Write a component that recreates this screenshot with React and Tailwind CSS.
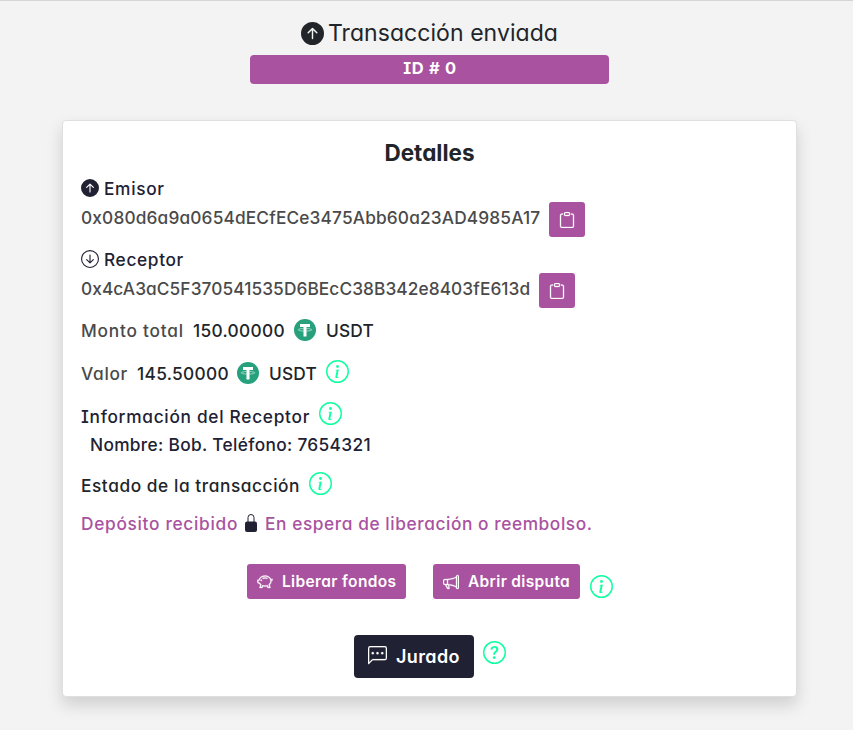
import React from "react";
import {
  BsArrowUpCircleFill,
  BsArrowDownCircle,
  BsClipboard,
  BsInfoCircle,
  BsQuestionCircle,
  BsPiggyBank,
  BsMegaphone,
  BsChatLeftDots,
} from "react-icons/bs";

function Tether() {
  return (
    <svg viewBox="0 0 22 22" className="size-[22px] shrink-0">
      <circle cx="11" cy="11" r="11" fill="#26a17b" />
      <path d="M6 5h10v2.9h-3.5v9.6h-3V7.9H6z" fill="#fff" />
      <path
        d="M9.5 9.5C6.3 9.6 4.2 10.2 4.2 10.8c0 .7 3 1.3 6.8 1.3s6.8-.6 6.8-1.3c0-.6-2.1-1.2-5.3-1.3"
        fill="none"
        stroke="#fff"
        strokeOpacity=".65"
        strokeWidth=".8"
      />
    </svg>
  );
}

function Lock() {
  return (
    <svg viewBox="0 0 12 18" className="h-[18px] w-3 shrink-0">
      <path d="M3 8V3.5a3 3 0 0 1 6 0V8" fill="none" stroke="#212134" strokeWidth="1" />
      <rect y="7.5" width="12" height="10.5" rx="2" fill="#212134" />
    </svg>
  );
}

function Info({ className = "" }) {
  return <BsInfoCircle className={`size-[23px] shrink-0 text-[#10ffa0] ${className}`} />;
}

function CopyButton() {
  return (
    <button className="flex h-[35px] w-9 items-center justify-center rounded-[3px] bg-[#a9529f] text-white">
      <BsClipboard className="size-4 stroke-[0.3]" />
    </button>
  );
}

export default function App() {
  return (
    <div className="flex h-[730px] w-[853px] flex-col overflow-hidden border-t border-[#d5d5d5] bg-[#f3f3f3] [font-family:Inter,'Noto_Sans',sans-serif] [font-feature-settings:'cv11','cv08'] text-[#212529]">
      <header className="ml-[250px] flex w-[359px] flex-col">
        <h1 className="mt-4 flex h-8 items-center justify-center gap-1 text-[23px] tracking-[0.06px] whitespace-nowrap">
          <BsArrowUpCircleFill className="size-[23px]" />
          Transacción enviada
        </h1>
        <div className="mt-1.5 flex h-[29px] items-center justify-center rounded-[4px] bg-[#a9529f] pb-0.5 pl-px text-[16.5px] font-bold tracking-[0.7px] text-white">
          ID # 0
        </div>
      </header>

      <main className="mt-9 ml-[62px] flex h-[577px] w-[735px] flex-col rounded-[4px] border border-[#dfdfdf] bg-white px-[18px] text-[17.3px] font-medium whitespace-nowrap shadow-[0_8px_16px_rgba(0,0,0,0.15)]">
        <h2 className="mt-4 flex h-8 items-center justify-center text-[22.5px] font-bold">Detalles</h2>

        <div className="mt-[7px] flex h-6 items-center gap-[5px] tracking-[0.7px] text-[#212134]">
          <BsArrowUpCircleFill className="size-[18px]" />
          <span className="pt-0.5">Emisor</span>
        </div>
        <div className="mt-0.5 flex h-[35px] items-start justify-start text-[#4a4a4a]">
          <span className="w-[468px] leading-8 tracking-[0.15px]">0x080d6a9a0654dECfECe3475Abb60a23AD4985A17</span>
          <CopyButton />
        </div>

        <div className="mt-2.5 flex h-6 items-center gap-[5px] tracking-[0.65px] text-[#212134]">
          <BsArrowDownCircle className="size-[18px]" />
          <span className="pt-0.5">Receptor</span>
        </div>
        <div className="mt-0.5 flex h-[35px] items-start text-[#4a4a4a]">
          <span className="w-[458px] leading-8 tracking-[0.08px]">0x4cA3aC5F370541535D6BEcC38B342e8403fE613d</span>
          <CopyButton />
        </div>

        <div className="mt-[11px] flex h-[22px] items-center">
          <span className="w-[112px] pt-0.5 tracking-[0.79px] text-[#4a4a4a]">Monto total</span>
          <span className="w-[101px] pt-0.5 tracking-[0.32px]">150.00000</span>
          <Tether />
          <span className="ml-2.5 pt-0.5 tracking-[0.2px]">USDT</span>
        </div>

        <div className="mt-[21px] flex h-[22px] items-center">
          <span className="w-14 pt-0.5 tracking-[0.7px] text-[#4a4a4a]">Valor</span>
          <span className="w-[100px] pt-0.5 tracking-[0.32px]">145.50000</span>
          <Tether />
          <span className="ml-2.5 w-[57px] pt-0.5 tracking-[0.2px]">USDT</span>
          <Info className="mb-[3px]" />
        </div>

        <div className="mt-[21px] flex h-[22px] items-center text-[#212134]">
          <span className="w-[238px] pt-0.5 tracking-[0.71px]">Información del Receptor</span>
          <Info className="mb-[5px]" />
        </div>
        <div className="mt-1.5 flex h-[22px] items-center pt-0.5 pl-[9px] tracking-[0.33px] text-[#212134]">
          Nombre: Bob. Teléfono: 7654321
        </div>

        <div className="mt-[19px] flex h-[22px] items-center">
          <span className="w-[228px] pt-0.5 tracking-[0.57px]">Estado de la transacción</span>
          <Info className="mb-1" />
        </div>

        <div className="mt-4 flex h-[22px] items-center text-[#a9529f]">
          <span className="w-[164px] pt-0.5 tracking-[0.7px]">Depósito recibido</span>
          <Lock />
          <span className="ml-2 pt-0.5 tracking-[0.58px]">En espera de liberación o reembolso.</span>
        </div>

        <div className="mt-[30px] flex h-[35px] pl-[166px] text-[15.5px] font-semibold">
          <button className="flex w-[159px] items-center rounded-[3px] bg-[#a9529f] pl-2.5 tracking-[0.36px] text-white">
            <BsPiggyBank className="mr-[9px] size-4 stroke-[0.3]" />
            Liberar fondos
          </button>
          <button className="ml-[27px] flex w-[147px] items-center rounded-[3px] bg-[#a9529f] pl-2.5 tracking-[0.33px] text-white">
            <BsMegaphone className="mr-[9px] size-4 stroke-[0.3]" />
            Abrir disputa
          </button>
          <Info className="mt-[11px] ml-2.5" />
        </div>

        <div className="mt-9 flex h-[43px] pl-[273px]">
          <button className="flex w-[120px] items-center rounded-[4px] bg-[#212134] pl-3.5 text-lg font-semibold tracking-[0.39px] text-white">
            <BsChatLeftDots className="mr-[9px] mb-0.5 size-[19px] stroke-[0.15]" />
            Jurado
          </button>
          <BsQuestionCircle className="mt-1.5 ml-[9px] size-[23px] text-[#10ffa0]" />
        </div>
      </main>
    </div>
  );
}
